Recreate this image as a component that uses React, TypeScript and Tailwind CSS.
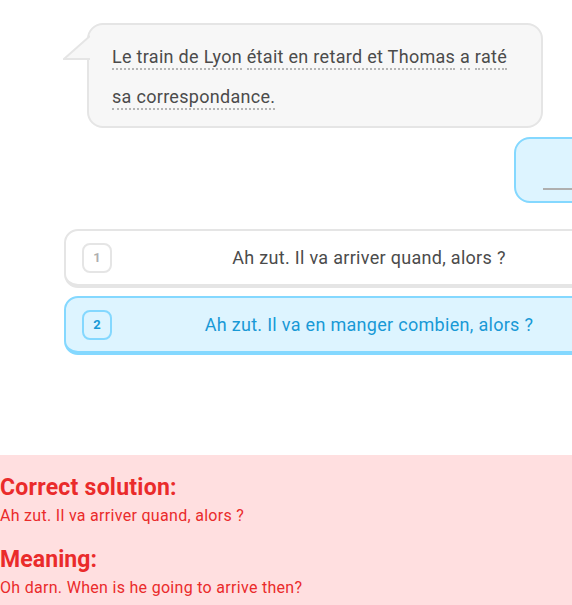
import React from "react";

const dot = "border-b-2 border-dotted border-[#b5b5b5] pb-[1px]";

function Option({ n, text, selected }: { n: number; text: string; selected?: boolean }) {
  return (
    <div
      className={
        "ml-[64px] w-[610px] h-[59px] flex items-center px-[16px] rounded-[14px] border-2 border-b-4 " +
        (selected ? "bg-[#ddf4ff] border-[#84d8ff]" : "bg-white border-[#e5e5e5]")
      }
    >
      <div
        className={
          "w-[30px] h-[30px] flex items-center justify-center rounded-[8px] border-2 text-[13px] font-bold " +
          (selected ? "border-[#84d8ff] text-[#1899d6]" : "border-[#e5e5e5] text-[#afafaf]")
        }
      >
        {n}
      </div>
      <div
        className={
          "flex-1 text-center text-[18px] tracking-[0.3px] " + (selected ? "text-[#1899d6]" : "text-[#4b4b4b]")
        }
      >
        {text}
      </div>
      <div className="w-[30px]" />
    </div>
  );
}

export default function App() {
  return (
    <div
      className="w-[572px] h-[605px] overflow-hidden bg-white flex flex-col"
      style={{ fontFamily: "Roboto, 'Noto Sans', sans-serif" }}
    >
      <div className="pt-[23px]">
        <div className="relative ml-[87px] w-[456px] h-[105px] rounded-[16px] border-2 border-[#e5e5e5] bg-[#f7f7f7] pl-[23px] pr-[24px] pt-[12px]">
          <svg className="absolute left-[-26px] top-[10px]" width="27" height="26" viewBox="0 0 27 26">
            <polygon points="27,1 1,24.5 27,24.5" fill="#f7f7f7" />
            <polyline points="27,1 1,24 27,24" fill="none" stroke="#e5e5e5" strokeWidth="2" />
          </svg>
          <p className="text-[18px] leading-[40px] tracking-[0.3px] text-[#4b4b4b]">
            <span className={dot}>Le train de Lyon</span> <span className={dot}>était en retard et Thomas</span>{" "}
            <span className={dot}>a</span> <span className={dot}>raté</span> <span className={dot}>sa correspondance.</span>
          </p>
        </div>
      </div>

      <div className="mt-[9px] ml-[514px] w-[140px] h-[66px] shrink-0 rounded-[16px] border-2 border-[#84d8ff] bg-[#ddf4ff] flex items-end pl-[27px] pb-[11px]">
        <div className="w-[90px] h-[2px] bg-[#afafaf]" />
      </div>

      <div className="mt-[26px] flex flex-col gap-[8px]">
        <Option n={1} text="Ah zut. Il va arriver quand, alors ?" />
        <Option n={2} text="Ah zut. Il va en manger combien, alors ?" selected />
      </div>

      <div className="mt-[100px] bg-[#ffdfe0] flex-1 pt-[19px] text-[#ea2b2b]">
        <div className="text-[23px] leading-[28px] font-bold tracking-[0.25px]">Correct solution:</div>
        <div className="mt-[4px] text-[16px] leading-[20px] tracking-[0.3px]">Ah zut. Il va arriver quand, alors ?</div>
        <div className="mt-[20px] text-[23px] leading-[28px] font-bold tracking-[0.1px]">Meaning:</div>
        <div className="mt-[4px] text-[16px] leading-[20px] tracking-[0.3px]">Oh darn. When is he going to arrive then?</div>
      </div>
    </div>
  );
}
